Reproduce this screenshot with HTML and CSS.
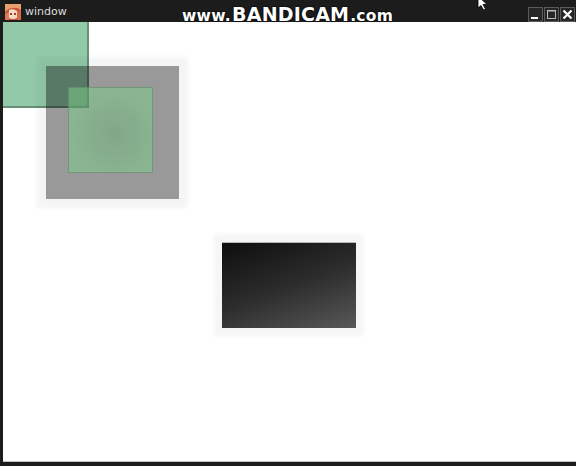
FILE: index.html
```html
<!DOCTYPE html>
<html>
<head>
<meta charset="utf-8">
<link rel="stylesheet" href="styles.css">
</head>
<body>
<div class="window">
  <div class="titlebar">
    <svg class="app-icon" width="16" height="16" viewBox="0 0 16 16">
      <rect x="0" y="0" width="16" height="16" fill="#c9553a"/>
      <path d="M0 0 H16 V6 Q12 3 8 4 Q3 4 0 8 Z" fill="#e8a06a"/>
      <path d="M4 6 Q8 4 12 7 L12 14 Q8 16 4 14 Z" fill="#f6dcc8"/>
      <path d="M5 9 h2 v2 h-2 z M9 9 h2 v2 h-2 z" fill="#a23a2c"/>
      <path d="M0 10 L4 8 L4 16 L0 16 Z" fill="#e27a5a"/>
      <path d="M12 8 L16 6 L16 16 L12 16 Z" fill="#d86a4a"/>
    </svg>
    <span class="title">window</span>
    <div class="spacer"></div>
    <div class="controls">
      <div class="ctl"><svg width="15" height="15" viewBox="0 0 15 15"><rect x="3" y="10" width="7" height="2" fill="#fff"/></svg></div>
      <div class="ctl"><svg width="15" height="15" viewBox="0 0 15 15"><rect x="3.5" y="3.5" width="8" height="8" fill="none" stroke="#bbb" stroke-width="1"/><rect x="3" y="3" width="9" height="1.5" fill="#bbb"/></svg></div>
      <div class="ctl"><svg width="15" height="15" viewBox="0 0 15 15"><path d="M3.5 3.5 L11.5 11.5 M11.5 3.5 L3.5 11.5" stroke="#fff" stroke-width="2.2"/></svg></div>
    </div>
    <div class="watermark"><span class="wm-small">www.</span><span class="wm-big">BANDICAM</span><span class="wm-small">.com</span></div>
    <svg class="cursor" width="14" height="14" viewBox="0 0 14 14">
      <path d="M1 -4 L1 8 L4 5.5 L6.5 10 L8.5 9 L6 4.5 L10 4.5 Z" fill="#fff" stroke="#000" stroke-width="0.8"/>
    </svg>
  </div>
  <div class="client">
    <div class="shape green-big"></div>
    <div class="shape gray-box"></div>
    <div class="shape green-inner"></div>
    <div class="shape dark-box"></div>
  </div>
</div>
</body>
</html>
```

FILE: styles.css
```css
html, body {
  margin: 0;
  padding: 0;
  width: 576px;
  height: 466px;
  overflow: hidden;
  background: #1b1b1b;
}

.window {
  display: flex;
  flex-direction: column;
  width: 576px;
  height: 466px;
  background: #1c1c1c;
}

.titlebar {
  position: relative;
  height: 22px;
  display: flex;
  align-items: center;
  padding-left: 5px;
  flex-shrink: 0;
  font-family: "DejaVu Sans", "Liberation Sans", sans-serif;
}

.app-icon {
  display: block;
  margin-top: 1px;
}

.title {
  margin-left: 4px;
  color: #dcdcdc;
  font-size: 11px;
  margin-top: 1px;
}

.spacer {
  flex: 1;
}

.controls {
  display: flex;
  gap: 1px;
  margin-top: 6px;
  margin-right: 1px;
}

.ctl {
  width: 15px;
  height: 15px;
  border: 1px solid #5a5a5a;
  box-sizing: border-box;
  background: #262626;
  display: flex;
  align-items: center;
  justify-content: center;
}

.ctl svg {
  display: block;
  flex-shrink: 0;
}

.watermark {
  position: absolute;
  left: 182px;
  top: 3px;
  height: 20px;
  display: flex;
  align-items: baseline;
  color: #ffffff;
  font-family: "DejaVu Sans", "Verdana", sans-serif;
  font-weight: bold;
  text-shadow: 0 0 2px #000, 0 0 1px #000;
  z-index: 2;
}

.wm-small {
  font-size: 15.5px;
  letter-spacing: 0.3px;
}

.wm-big {
  font-size: 19px;
  letter-spacing: 0.2px;
  margin-left: 1px;
  margin-right: 1px;
}

.cursor {
  position: absolute;
  left: 477px;
  top: 0;
}

.client {
  position: relative;
  flex: 1;
  margin: 0 0 4px 3px;
  background: #ffffff;
  border-bottom: 1px solid #c4c4c4;
  overflow: hidden;
}

.shape {
  position: absolute;
  box-sizing: border-box;
}

.green-big {
  left: 0;
  top: -2px;
  width: 86px;
  height: 88px;
  background: rgba(38, 150, 84, 0.5);
  border-right: 2px solid rgba(70, 95, 80, 0.55);
  border-bottom: 2px solid rgba(70, 95, 80, 0.55);
}

.gray-box {
  left: 43px;
  top: 44px;
  width: 133px;
  height: 133px;
  background: rgba(0, 0, 0, 0.4);
  box-shadow: 0 0 5px 9px rgba(0, 0, 0, 0.045);
}

.green-inner {
  left: 65px;
  top: 65px;
  width: 85px;
  height: 86px;
  background: radial-gradient(circle at 55% 55%, rgba(105, 180, 120, 0.5) 0%, rgba(125, 210, 140, 0.5) 70%);
  border: 1px solid rgba(90, 120, 95, 0.5);
}

.dark-box {
  left: 219px;
  top: 220px;
  width: 134px;
  height: 86px;
  background: linear-gradient(160deg, #0e0e0e 0%, #2c2c2c 50%, #585858 100%);
  border-top: 1px solid #b8b8b8;
  box-shadow: 0 0 5px 8px rgba(0, 0, 0, 0.04);
}
```
